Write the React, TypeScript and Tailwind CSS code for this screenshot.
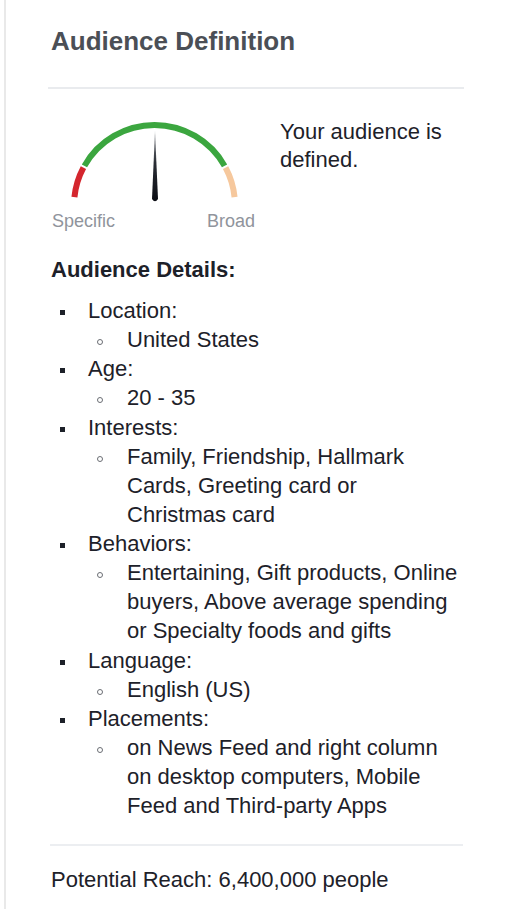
import React from "react";

type Item = { label: string; values: string[] };

const items: Item[] = [
  { label: "Location:", values: ["United States"] },
  { label: "Age:", values: ["20 - 35"] },
  { label: "Interests:", values: ["Family, Friendship, Hallmark Cards, Greeting card or Christmas card"] },
  {
    label: "Behaviors:",
    values: ["Entertaining, Gift products, Online buyers, Above average spending or Specialty foods and gifts"],
  },
  { label: "Language:", values: ["English (US)"] },
  {
    label: "Placements:",
    values: ["on News Feed and right column on desktop computers, Mobile Feed and Third-party Apps"],
  },
];

const CX = 154.5;
const CY = 205.5;
const R = 80.5;

function arc(a1: number, a2: number) {
  const p = (a: number) => {
    const r = (a * Math.PI) / 180;
    return [CX + R * Math.cos(r), CY - R * Math.sin(r)];
  };
  const [x1, y1] = p(a1);
  const [x2, y2] = p(a2);
  return `M ${x1.toFixed(2)} ${y1.toFixed(2)} A ${R} ${R} 0 0 1 ${x2.toFixed(2)} ${y2.toFixed(2)}`;
}

function Gauge() {
  return (
    <div className="flex w-[212px] flex-col">
      <svg width="212" height="92" viewBox="48 116 212 92" className="block">
        <defs>
          <linearGradient id="needle" x1="0" y1="0" x2="0" y2="1">
            <stop offset="0" stopColor="#8a8d93" />
            <stop offset="0.45" stopColor="#2a2d35" />
            <stop offset="1" stopColor="#0b0d14" />
          </linearGradient>
        </defs>
        <path d={arc(174, 152)} stroke="#d4262e" strokeWidth="6" fill="none" />
        <path d={arc(150.5, 29.5)} stroke="#3ba63f" strokeWidth="6" fill="none" />
        <path d={arc(28, 6)} stroke="#f6c89d" strokeWidth="6" fill="none" />
        <path d="M 155 131 L 158 199 Q 155 203.5 152 199 Z" fill="url(#needle)" />
      </svg>
      <div className="mt-[2px] flex justify-between pl-[4px] pr-[5px] text-[18px] leading-[22px] text-[#90949c]">
        <span>Specific</span>
        <span>Broad</span>
      </div>
    </div>
  );
}

export default function App() {
  return (
    <div
      className="h-[909px] w-[510px] bg-white"
      style={{ fontFamily: '"Liberation Sans", Arial, Helvetica, sans-serif' }}
    >
      <div className="ml-[4px] flex h-full flex-col border-l-2 border-[#e9e9e9] pl-[45px] pr-[50px]">
        <h1 className="pt-[26px] text-[26px] font-bold leading-[30px] text-[#4b4f56]">Audience Definition</h1>
        <div className="-ml-[3px] -mr-[4px] mt-[31px] h-[2px] bg-[#e9ebee]" />

        <div className="mt-[27px] flex -ml-[3px]">
          <Gauge />
          <div className="ml-[20px] mt-[2px] flex-1 text-[22px] leading-[28px] text-[#1d2129]">
            Your audience is defined.
          </div>
        </div>

        <div className="mt-[23px] text-[22px] font-bold leading-[29px] text-[#1d2129]">Audience Details:</div>

        <ul className="mt-[12px] text-[22px] leading-[29.12px] text-[#1d2129]">
          {items.map((it) => (
            <li key={it.label} className="flex">
              <div className="w-[37px] shrink-0 pl-[9px]">
                <div className="mt-[14px] h-[5px] w-[5px] bg-[#1d2129]" />
              </div>
              <div className="flex-1">
                <div>{it.label}</div>
                <ul>
                  {it.values.map((v) => (
                    <li key={v} className="flex">
                      <div className="w-[39px] shrink-0 pl-[9px]">
                        <div className="mt-[14px] h-[6px] w-[6px] rounded-full border border-[#6b6e74]" />
                      </div>
                      <div className="flex-1">{v}</div>
                    </li>
                  ))}
                </ul>
              </div>
            </li>
          ))}
        </ul>

        <div className="-ml-[1px] -mr-[3px] mt-[24px] h-[2px] bg-[#eceef1]" />
        <div className="mt-[19px] text-[22px] leading-[29px] text-[#1d2129]">Potential Reach: 6,400,000 people</div>
      </div>
    </div>
  );
}
